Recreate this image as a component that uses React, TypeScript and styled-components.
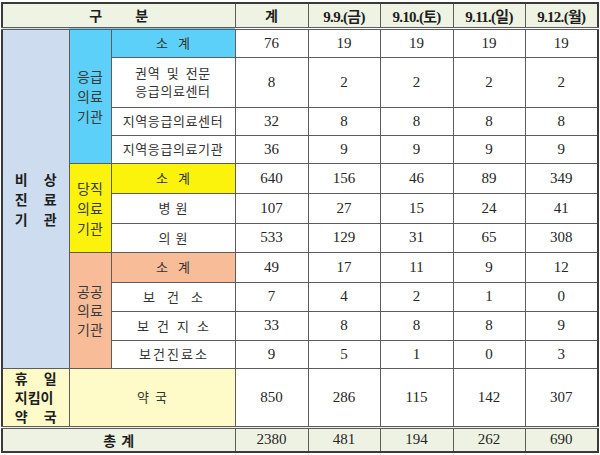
import React from 'react';
import styled, { createGlobalStyle, css } from 'styled-components';

const GlobalStyle = createGlobalStyle`
  html, body { margin: 0; padding: 0; background: #ffffff; }
  body { font-family: "Noto Sans CJK KR", "Noto Sans", sans-serif; }
`;

const C = {
  head: '#eff3e3',
  total: '#eef2e3',
  side: '#cddcee',
  cyan: '#5cd0f8',
  yellow: '#fbf30c',
  orange: '#f8bc98',
  pale: '#fefbc8',
  line: '#5c5c5c',
};

const Page = styled.div`
  padding: 2px 3px 0 1px;
  width: 600px;
  box-sizing: border-box;
`;

const Table = styled.table`
  width: 596px;
  border-collapse: collapse;
  table-layout: fixed;
  border: 2px solid #3a3a3a;
`;

const Row = styled.tr<{ $h: number }>`
  height: ${(p) => p.$h}px;
`;

const cellBase = css`
  border: 1px solid ${C.line};
  padding: 0;
  text-align: center;
  vertical-align: middle;
  color: #2e2e2e;
`;

const HeadCell = styled.th<{ $serif?: boolean }>`
  ${cellBase};
  background: ${C.head};
  border-bottom: 3px double ${C.line};
  font-weight: 700;
  color: #1e1e1e;
  font-size: ${(p) => (p.$serif ? '15px' : '14px')};
  font-family: ${(p) =>
    p.$serif ? '"Liberation Serif", "Noto Sans CJK KR", serif' : '"Noto Sans CJK KR", sans-serif'};
  letter-spacing: ${(p) => (p.$serif ? '-0.7px' : '0')};
`;

const CategoryCell = styled.td<{ $bg: string }>`
  ${cellBase};
  background: ${(p) => p.$bg};
  font-weight: 700;
  font-size: 14px;
  color: #1e1e1e;
`;

const GroupCell = styled.td<{ $bg: string }>`
  ${cellBase};
  background: ${(p) => p.$bg};
  font-size: 14px;
  color: #3a3a3a;
`;

const ItemCell = styled.td<{ $bg?: string }>`
  ${cellBase};
  background: ${(p) => p.$bg ?? '#ffffff'};
  font-size: 13px;
  color: #333333;
  line-height: 18px;
  letter-spacing: 0.6px;
  word-spacing: 3px;
`;

const NumCell = styled.td<{ $bg?: string }>`
  ${cellBase};
  background: ${(p) => p.$bg ?? '#ffffff'};
  font-family: "Liberation Serif", "Times New Roman", serif;
  font-size: 15px;
  color: #262626;
`;

const TotalLabel = styled.td`
  ${cellBase};
  background: ${C.total};
  border-top: 3px double ${C.line};
  font-weight: 700;
  font-size: 14px;
  color: #1e1e1e;
`;

const TotalNum = styled(NumCell)`
  background: ${C.total};
  border-top: 3px double ${C.line};
`;

const SpreadBox = styled.span<{ $gap: number }>`
  display: inline-flex;
  gap: ${(p) => p.$gap}px;
  letter-spacing: 0;
`;

const Stack = styled.div<{ $lh: number }>`
  display: flex;
  flex-direction: column;
  align-items: center;
  line-height: ${(p) => p.$lh}px;
`;

const JLine = styled.span<{ $w: number }>`
  display: flex;
  justify-content: space-between;
  width: ${(p) => p.$w}px;
`;

function Spread({ text, gap }: { text: string; gap: number }) {
  return (
    <SpreadBox $gap={gap}>
      {[...text].map((ch, i) => (
        <span key={i}>{ch}</span>
      ))}
    </SpreadBox>
  );
}

function JustifiedStack({ lines, width, lh }: { lines: string[][]; width: number; lh: number }) {
  return (
    <Stack $lh={lh}>
      {lines.map((parts, i) => (
        <JLine key={i} $w={width}>
          {parts.map((p, j) => (
            <span key={j}>{p}</span>
          ))}
        </JLine>
      ))}
    </Stack>
  );
}

function Nums({ values, bg }: { values: number[]; bg?: string }) {
  return (
    <>
      {values.map((v, i) => (
        <NumCell key={i} $bg={bg}>
          {v}
        </NumCell>
      ))}
    </>
  );
}

const widths = [67, 42, 124, 73, 72, 73, 72, 73];
const dates = ['9.9.(금)', '9.10.(토)', '9.11.(일)', '9.12.(월)'];

export default function App() {
  return (
    <>
      <GlobalStyle />
      <Page>
        <Table>
          <colgroup>
            {widths.map((w, i) => (
              <col key={i} style={{ width: w }} />
            ))}
          </colgroup>
          <thead>
            <Row $h={25}>
              <HeadCell colSpan={3}>
                <Spread text="구분" gap={33} />
              </HeadCell>
              <HeadCell>계</HeadCell>
              {dates.map((d) => (
                <HeadCell key={d} $serif>
                  {d}
                </HeadCell>
              ))}
            </Row>
          </thead>
          <tbody>
            <Row $h={29}>
              <CategoryCell rowSpan={11} $bg={C.side}>
                <JustifiedStack
                  width={42}
                  lh={20}
                  lines={[
                    ['비', '상'],
                    ['진', '료'],
                    ['기', '관'],
                  ]}
                />
              </CategoryCell>
              <GroupCell rowSpan={4} $bg={C.cyan}>
                <Stack $lh={20}>
                  <span>응급</span>
                  <span>의료</span>
                  <span>기관</span>
                </Stack>
              </GroupCell>
              <ItemCell $bg={C.cyan}>
                <Spread text="소계" gap={10} />
              </ItemCell>
              <Nums values={[76, 19, 19, 19, 19]} />
            </Row>
            <Row $h={50}>
              <ItemCell>
                권역 및 전문
                <br />
                응급의료센터
              </ItemCell>
              <Nums values={[8, 2, 2, 2, 2]} />
            </Row>
            <Row $h={28}>
              <ItemCell>지역응급의료센터</ItemCell>
              <Nums values={[32, 8, 8, 8, 8]} />
            </Row>
            <Row $h={28}>
              <ItemCell>지역응급의료기관</ItemCell>
              <Nums values={[36, 9, 9, 9, 9]} />
            </Row>
            <Row $h={30}>
              <GroupCell rowSpan={3} $bg={C.yellow}>
                <Stack $lh={20}>
                  <span>당직</span>
                  <span>의료</span>
                  <span>기관</span>
                </Stack>
              </GroupCell>
              <ItemCell $bg={C.yellow}>
                <Spread text="소계" gap={10} />
              </ItemCell>
              <Nums values={[640, 156, 46, 89, 349]} />
            </Row>
            <Row $h={30}>
              <ItemCell>
                <Spread text="병원" gap={5} />
              </ItemCell>
              <Nums values={[107, 27, 15, 24, 41]} />
            </Row>
            <Row $h={29}>
              <ItemCell>
                <Spread text="의원" gap={5} />
              </ItemCell>
              <Nums values={[533, 129, 31, 65, 308]} />
            </Row>
            <Row $h={30}>
              <GroupCell rowSpan={4} $bg={C.orange}>
                <Stack $lh={19}>
                  <span>공공</span>
                  <span>의료</span>
                  <span>기관</span>
                </Stack>
              </GroupCell>
              <ItemCell $bg={C.orange}>
                <Spread text="소계" gap={10} />
              </ItemCell>
              <Nums values={[49, 17, 11, 9, 12]} />
            </Row>
            <Row $h={29}>
              <ItemCell>
                <Spread text="보건소" gap={12} />
              </ItemCell>
              <Nums values={[7, 4, 2, 1, 0]} />
            </Row>
            <Row $h={29}>
              <ItemCell>
                <Spread text="보건지소" gap={8} />
              </ItemCell>
              <Nums values={[33, 8, 8, 8, 9]} />
            </Row>
            <Row $h={28}>
              <ItemCell>
                <Spread text="보건진료소" gap={2} />
              </ItemCell>
              <Nums values={[9, 5, 1, 0, 3]} />
            </Row>
            <Row $h={57}>
              <CategoryCell $bg={C.pale}>
                <JustifiedStack
                  width={42}
                  lh={19}
                  lines={[['휴', '일'], ['지킴이'], ['약', '국']]}
                />
              </CategoryCell>
              <ItemCell colSpan={2} $bg={C.pale}>
                <Spread text="약국" gap={6} />
              </ItemCell>
              <Nums values={[850, 286, 115, 142, 307]} />
            </Row>
            <Row $h={25}>
              <TotalLabel colSpan={3}>
                <Spread text="총계" gap={5} />
              </TotalLabel>
              {[2380, 481, 194, 262, 690].map((v, i) => (
                <TotalNum key={i}>{v}</TotalNum>
              ))}
            </Row>
          </tbody>
        </Table>
      </Page>
    </>
  );
}
